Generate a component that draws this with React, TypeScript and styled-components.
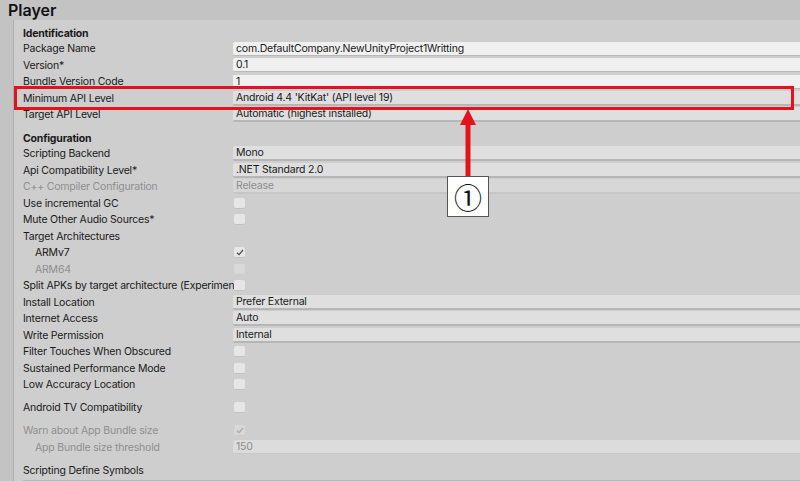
import * as React from 'react';
import styled, { createGlobalStyle } from 'styled-components';

const GlobalStyle = createGlobalStyle`
    html, body {
        margin: 0;
        padding: 0;
        overflow: hidden;
    }
    body {
        font-family: Inter, 'Noto Sans', 'Liberation Sans', sans-serif;
    }
`;

const Page = styled.div`
    position: relative;
    width: 800px;
    height: 481px;
    overflow: hidden;
    background-color: #c3c3c3;
    color: #1a1a1a;
    font-size: 10.5px;
    letter-spacing: -0.2px;
`;

const Title = styled.div`
    height: 20px;
    line-height: 21px;
    padding-left: 8px;
    font-size: 16px;
    font-weight: 600;
    letter-spacing: 0;
    color: #111111;
`;

const Panel = styled.div`
    margin-left: 13px;
    height: 461px;
    box-sizing: border-box;
    border-left: 1px solid #adadad;
    background-color: #cecece;
    padding: 5.5px 0 0 9px;
    display: flex;
    flex-direction: column;
`;

const SectionHeading = styled.div`
    height: 15px;
    line-height: 15px;
    font-weight: 700;
`;

const Spacer = styled.div<{ $size: number }>`
    height: ${(p) => p.$size}px;
    flex-shrink: 0;
`;

const Row = styled.div`
    display: flex;
    flex-direction: row;
    align-items: center;
    height: 16.5px;
    flex-shrink: 0;
`;

const Label = styled.div<{ $indent?: boolean; $disabled?: boolean }>`
    width: 210px;
    flex-shrink: 0;
    box-sizing: border-box;
    padding-left: ${(p) => (p.$indent ? 12 : 0)}px;
    white-space: nowrap;
    color: ${(p) => (p.$disabled ? '#8e8e8e' : '#1a1a1a')};
`;

const TextField = styled.div`
    flex: 1;
    height: 14px;
    line-height: 14px;
    box-sizing: border-box;
    padding-left: 3px;
    background-color: #f0f0f0;
    border-bottom: 1px solid #b9b9b9;
    border-radius: 2px 0 0 2px;
    white-space: nowrap;
`;

const Dropdown = styled.div<{ $disabled?: boolean }>`
    flex: 1;
    height: 15px;
    line-height: 13px;
    box-sizing: border-box;
    padding-left: 3px;
    background-color: ${(p) => (p.$disabled ? '#d7d7d7' : '#dfdfdf')};
    border-bottom: 2px solid ${(p) => (p.$disabled ? '#c6c6c6' : '#b6b6b6')};
    border-radius: 2px 0 0 2px;
    color: ${(p) => (p.$disabled ? '#8e8e8e' : '#1a1a1a')};
    white-space: nowrap;
`;

const NumberField = styled(TextField)`
    background-color: #dcdcdc;
    border-bottom-color: #c8c8c8;
    color: #8e8e8e;
`;

const Check = styled.div<{ $disabled?: boolean }>`
    width: 11px;
    height: 11px;
    margin-left: 1px;
    border-radius: 2px;
    background-color: ${(p) => (p.$disabled ? '#d8d8d8' : '#e6e6e6')};
    border-bottom: 1px solid ${(p) => (p.$disabled ? '#cbcbcb' : '#c2c2c2')};
    box-sizing: border-box;
    display: flex;
    align-items: center;
    justify-content: center;
`;

const DefineField = styled.div`
    margin-top: 1px;
    height: 20px;
    background-color: #e4e4e4;
    border-top: 1px solid #b7b7b7;
`;

// annotation overlay
const Highlight = styled.div`
    position: absolute;
    left: 14px;
    top: 86px;
    width: 780px;
    height: 24px;
    box-sizing: border-box;
    border: 3px solid #e3121b;
`;

const ArrowSvg = styled.svg`
    position: absolute;
    left: 458px;
    top: 109px;
`;

const Callout = styled.div`
    position: absolute;
    left: 447px;
    top: 176px;
    width: 42px;
    height: 41px;
    box-sizing: border-box;
    background-color: #ffffff;
    border: 1px solid #555555;
    display: flex;
    align-items: center;
    justify-content: center;
    font-family: 'Noto Sans CJK JP', 'DejaVu Sans', sans-serif;
    font-size: 28px;
    letter-spacing: 0;
    color: #111111;
`;

const CheckMark = ({ disabled }: { disabled?: boolean }) => (
    <svg width="8" height="7" viewBox="0 0 8 7">
        <path
            d="M1 3.8 L3 5.6 L7 1"
            fill="none"
            stroke={disabled ? '#a8a8a8' : '#4a4a4a'}
            strokeWidth="1.2"
        />
    </svg>
);

type Field =
    | { kind: 'text'; value: string }
    | { kind: 'drop'; value: string; disabled?: boolean }
    | { kind: 'number'; value: string }
    | { kind: 'check'; checked?: boolean; disabled?: boolean };

const PropRow = (props: { label: string; field: Field; indent?: boolean; disabled?: boolean }) => {
    const { field } = props;
    let control: React.ReactNode = null;
    if (field.kind === 'text') control = <TextField>{field.value}</TextField>;
    if (field.kind === 'number') control = <NumberField>{field.value}</NumberField>;
    if (field.kind === 'drop')
        control = <Dropdown $disabled={field.disabled}>{field.value}</Dropdown>;
    if (field.kind === 'check')
        control = (
            <Check $disabled={field.disabled}>
                {field.checked && <CheckMark disabled={field.disabled} />}
            </Check>
        );
    return (
        <Row>
            <Label $indent={props.indent} $disabled={props.disabled}>
                {props.label}
            </Label>
            {control}
        </Row>
    );
};

const LabelOnly = styled(Row)``;

export default function App() {
    return (
        <Page>
            <GlobalStyle />
            <Title>Player</Title>
            <Panel>
                <SectionHeading>Identification</SectionHeading>
                <PropRow label="Package Name" field={{ kind: 'text', value: 'com.DefaultCompany.NewUnityProject1Writting' }} />
                <PropRow label="Version*" field={{ kind: 'text', value: '0.1' }} />
                <PropRow label="Bundle Version Code" field={{ kind: 'text', value: '1' }} />
                <PropRow label="Minimum API Level" field={{ kind: 'drop', value: "Android 4.4 'KitKat' (API level 19)" }} />
                <PropRow label="Target API Level" field={{ kind: 'drop', value: 'Automatic (highest installed)' }} />
                <Spacer $size={7.5} />
                <SectionHeading>Configuration</SectionHeading>
                <PropRow label="Scripting Backend" field={{ kind: 'drop', value: 'Mono' }} />
                <PropRow label="Api Compatibility Level*" field={{ kind: 'drop', value: '.NET Standard 2.0' }} />
                <PropRow label="C++ Compiler Configuration" disabled field={{ kind: 'drop', value: 'Release', disabled: true }} />
                <PropRow label="Use incremental GC" field={{ kind: 'check' }} />
                <PropRow label="Mute Other Audio Sources*" field={{ kind: 'check' }} />
                <LabelOnly>
                    <Label>Target Architectures</Label>
                </LabelOnly>
                <PropRow label="ARMv7" indent field={{ kind: 'check', checked: true }} />
                <PropRow label="ARM64" indent disabled field={{ kind: 'check', disabled: true }} />
                <PropRow label="Split APKs by target architecture (Experimen" field={{ kind: 'check' }} />
                <PropRow label="Install Location" field={{ kind: 'drop', value: 'Prefer External' }} />
                <PropRow label="Internet Access" field={{ kind: 'drop', value: 'Auto' }} />
                <PropRow label="Write Permission" field={{ kind: 'drop', value: 'Internal' }} />
                <PropRow label="Filter Touches When Obscured" field={{ kind: 'check' }} />
                <PropRow label="Sustained Performance Mode" field={{ kind: 'check' }} />
                <PropRow label="Low Accuracy Location" field={{ kind: 'check' }} />
                <Spacer $size={6.5} />
                <PropRow label="Android TV Compatibility" field={{ kind: 'check' }} />
                <Spacer $size={6.5} />
                <PropRow label="Warn about App Bundle size" disabled field={{ kind: 'check', checked: true, disabled: true }} />
                <PropRow label="App Bundle size threshold" indent disabled field={{ kind: 'number', value: '150' }} />
                <Spacer $size={6.5} />
                <LabelOnly>
                    <Label>Scripting Define Symbols</Label>
                </LabelOnly>
                <DefineField />
            </Panel>

            <Highlight />
            <ArrowSvg width="20" height="68" viewBox="0 0 20 68">
                <polygon points="10,0 2,16 18,16" fill="#e3121b" />
                <rect x="7.5" y="15" width="5" height="53" fill="#e3121b" />
            </ArrowSvg>
            <Callout>①</Callout>
        </Page>
    );
}
